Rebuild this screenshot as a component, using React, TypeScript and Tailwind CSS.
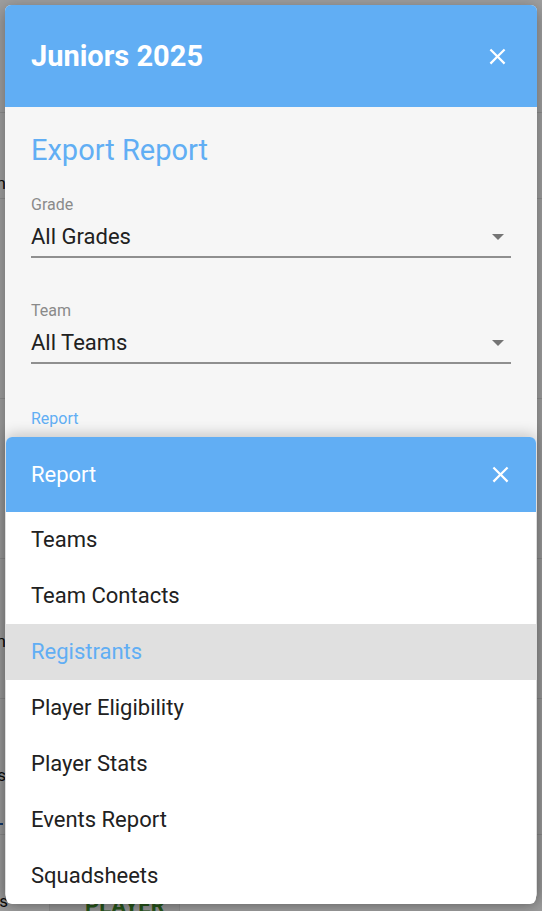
import React from 'react';

const FONT = "font-['Roboto','Liberation_Sans',sans-serif]";

const REPORTS = [
  'Teams',
  'Team Contacts',
  'Registrants',
  'Player Eligibility',
  'Player Stats',
  'Events Report',
  'Squadsheets',
];

const CloseIcon: React.FC<{ size?: number }> = ({ size = 27 }) => (
  <svg width={size} height={size} viewBox="0 0 24 24" fill="#ffffff">
    <path d="M19 6.41 17.59 5 12 10.59 6.41 5 5 6.41 10.59 12 5 17.59 6.41 19 12 13.41 17.59 19 19 17.59 13.41 12z" />
  </svg>
);

const SelectField: React.FC<{ label: string; value: string; className?: string }> = ({ label, value, className }) => (
  <div className={className}>
    <div className="text-[16px] leading-[18px] text-[#8a8a8a]">{label}</div>
    <div className="mt-[10px] flex items-center justify-between pb-[6px] pr-[7px] border-b-2 border-[#8f8f8f]">
      <span className="text-[22px] leading-[26px] text-[#212121]">{value}</span>
      {/* dropdown caret */}
      <span className="w-0 h-0 border-l-[6px] border-r-[6px] border-t-[6px] border-l-transparent border-r-transparent border-t-[#757575]" />
    </div>
  </div>
);

// faint page behind the backdrop, only edges of it show
const BackgroundPage: React.FC = () => (
  <div className="flex flex-col text-[17px] leading-[20px] text-[#111]">
    <div className="h-[113px] border-b border-[#e6e6e6]" />
    <div className="h-[86px] border-b border-[#e6e6e6] pt-[60px]">
      <div className="w-[6px] flex justify-end whitespace-nowrap">Division</div>
    </div>
    <div className="h-[200px] border-b border-[#e6e6e6]" />
    <div className="h-[160px] border-b border-[#e6e6e6]" />
    <div className="h-[140px] border-b border-[#e6e6e6] pt-[72px]">
      <div className="w-[6px] flex justify-end whitespace-nowrap">Season</div>
    </div>
    <div className="h-[136px] border-b border-[#e6e6e6] pt-[66px]">
      <div className="w-[6px] flex justify-end whitespace-nowrap">Players</div>
      <div className="mt-[38px] w-[3px] h-[2px] bg-[#1e5fb4]" />
    </div>
    <div className="flex h-[80px]">
      <div className="w-[50px] border-r border-[#e6e6e6] pt-[56px]">
        <div className="w-[8px] flex justify-end whitespace-nowrap">Goals</div>
      </div>
      <div className="w-[130px] border-r border-[#e6e6e6] pl-[35px] pt-[60px] bg-[#f3f3f3]">
        <span className="text-[22px] font-bold text-[#3e8a2a] leading-none">PLAYER</span>
      </div>
    </div>
  </div>
);

export default function App() {
  return (
    <div className={`relative h-[911px] w-[542px] overflow-hidden bg-white ${FONT}`}>
      <BackgroundPage />
      <div className="absolute inset-0 bg-black/[0.38]" />

      {/* main dialog */}
      <div className="absolute left-[5px] top-[5px] w-[532px] h-[895px] rounded-[6px] overflow-hidden bg-[#f6f6f6] shadow-[0_4px_16px_rgba(0,0,0,0.35)]">
        <div className="h-[102px] bg-[#61aef4] flex items-center justify-between pl-[26px] pr-[26px]">
          <h1 className="text-[29px] font-bold text-white leading-none">Juniors 2025</h1>
          <CloseIcon />
        </div>
        <div className="px-[26px]">
          <h2 className="mt-[26px] text-[29px] leading-[34px] text-[#61aef4]">Export Report</h2>
          <SelectField className="mt-[29px]" label="Grade" value="All Grades" />
          <SelectField className="mt-[44px]" label="Team" value="All Teams" />
          <div className="mt-[46px] text-[16px] leading-[18px] text-[#61aef4]">Report</div>
        </div>
      </div>

      {/* report picker sheet */}
      <div className="absolute left-[6px] top-[437px] w-[530px] rounded-[6px] overflow-hidden bg-white shadow-[0_-3px_14px_rgba(0,0,0,0.2)]">
        <div className="h-[75px] bg-[#61aef4] flex items-center justify-between pl-[25px] pr-[22px]">
          <span className="text-[22px] leading-[26px] text-white">Report</span>
          <CloseIcon />
        </div>
        <ul>
          {REPORTS.map((r) => (
            <li
              key={r}
              className={`h-[56px] pl-[25px] text-[22px] leading-[56px] ${
                r === 'Registrants' ? 'bg-[#e0e0e0] text-[#61aef4]' : 'text-[#212121]'
              }`}
            >
              {r}
            </li>
          ))}
        </ul>
      </div>
    </div>
  );
}
